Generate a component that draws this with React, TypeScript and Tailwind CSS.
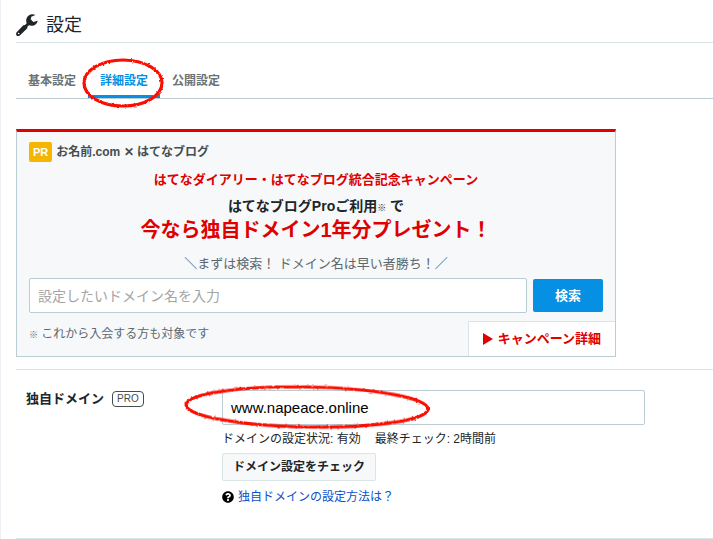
import type { ReactNode } from "react";
import { FaQuestionCircle } from "react-icons/fa";

const TABS = [
  { label: "基本設定", href: "#basic", active: false },
  { label: "詳細設定", href: "#detail", active: true },
  { label: "公開設定", href: "#publish", active: false },
];

function WrenchIcon() {
  return (
    <svg className="size-[22px]" viewBox="0 0 66 66" fill="currentColor" aria-hidden="true">
      <path
        fillRule="evenodd"
        d="M58 3C48-2 34 3 31 15c-1 5 0 9 1 13l-5 5-5 1L2 55c-3 4-2 9 2 11 3 1 7 0 9-3l21-20v-5l5-4c11 4 24-1 26-14l-13 4-8-8 2-8zM8 56a2.5 2.5 0 1 1 0 5 2.5 2.5 0 0 1 0-5z"
      />
    </svg>
  );
}

// red crayon ring drawn over the page
function HandCircle({ id, className, width, height, rotate = 0 }: { id: string; className: string; width: number; height: number; rotate?: number }) {
  return (
    <svg className={`pointer-events-none absolute overflow-visible ${className}`} width={width} height={height} viewBox={`0 0 ${width} ${height}`} fill="none" aria-hidden="true">
      <filter id={id} x="-5%" y="-15%" width="110%" height="130%">
        <feTurbulence type="fractalNoise" baseFrequency="0.5" numOctaves="1" seed="4" />
        <feDisplacementMap in="SourceGraphic" scale="2.5" xChannelSelector="R" yChannelSelector="G" />
      </filter>
      <ellipse
        cx={width / 2}
        cy={height / 2}
        rx={width / 2 - 3}
        ry={height / 2 - 3}
        stroke="#fb0d05"
        strokeWidth="3.2"
        transform={`rotate(${rotate} ${width / 2} ${height / 2})`}
        filter={`url(#${id})`}
      />
    </svg>
  );
}

function Tabs() {
  return (
    <nav className="flex border-b border-[#b9cdd2] leading-5 font-bold">
      {TABS.map((t) => (
        <a
          key={t.label}
          href={t.href}
          className={
            t.active
              ? "relative border-b-3 border-[#0590e4] px-3 pt-2 pb-1 text-[#0590e4]"
              : "px-3 pt-2 pb-1 text-[#6a7377]"
          }
        >
          {t.label}
          {t.active && <HandCircle id="ring-tab" className="-top-[6px] -left-[7px]" width={84} height={52} />}
        </a>
      ))}
    </nav>
  );
}

function Campaign() {
  return (
    <section className="max-w-[600px] border border-t-3 border-[#b9cdd2] border-t-[#e00000] bg-[#f6f8fa]">
      <div className="px-3 pt-2">
        <p className="flex h-6 items-center gap-1 font-bold text-[#454d50]">
          <span className="rounded-xs bg-[#f4b600] px-1 text-[11px] leading-5 text-white">PR</span>
          お名前.com ✕ はてなブログ
        </p>
        <div className="flex flex-col items-center pt-1.5 font-bold">
          <p className="text-[13px] leading-5 text-[#e00000]">はてなダイアリー・はてなブログ統合記念キャンペーン</p>
          <p className="mt-1.5 text-sm leading-5 text-[#202528]">
            はてなブログProご利用<small className="text-[9px] font-normal">※</small> で
          </p>
          <p className="text-xl leading-6 text-[#e00000]">今なら独自ドメイン1年分プレゼント！</p>
        </div>
        <form className="pt-2.5" onSubmit={(e) => e.preventDefault()}>
          <label htmlFor="search" className="block text-center text-[13px] leading-6 text-[#5e686c]">
            ＼まずは検索！ ドメイン名は早い者勝ち！／
          </label>
          <div className="mt-0.5 flex items-center gap-1.5">
            <input
              id="search"
              type="text"
              placeholder="設定したいドメイン名を入力"
              className="h-[35px] min-w-0 flex-1 rounded-xs border border-[#b9cdd2] bg-white px-2 text-sm placeholder:text-[#a5a5a5]"
            />
            <button type="submit" className="h-[33px] rounded-xs bg-[#0590e4] px-[22px] text-[13px] font-bold text-white">
              検索
            </button>
          </div>
        </form>
      </div>
      <div className="flex items-end justify-between pt-2 pl-3">
        <p className="pb-3.5 text-[#5e686c]">
          <small className="text-[9px]">※</small> これから入会する方も対象です
        </p>
        <a href="#campaign" className="flex h-[35px] items-center gap-[5px] border-t border-l border-[#d9e5e7] bg-white px-3.5 text-[13px] font-bold text-[#e00000]">
          <svg width="10" height="12" viewBox="0 0 10 12" fill="currentColor" aria-hidden="true">
            <path d="M0 0 10 6 0 12z" />
          </svg>
          キャンペーン詳細
        </a>
      </div>
    </section>
  );
}

function SettingRow({ label, children }: { label: ReactNode; children: ReactNode }) {
  return (
    <section className="mt-3 flex border-y border-[#d9e5e7] pt-5 pb-[31px] pl-2.5">
      <div className="w-[196px] shrink-0">{label}</div>
      <div className="min-w-0 flex-1">{children}</div>
    </section>
  );
}

export default function App() {
  return (
    <div className="min-h-screen border-l border-[#eceff4] bg-white pl-[15px] font-['Liberation_Sans','Noto_Sans_CJK_JP',sans-serif] text-xs text-[#202528]">
      <h1 className="flex h-[43px] items-center gap-2 border-b border-[#d9e5e7] pt-2 text-lg">
        <WrenchIcon />
        設定
      </h1>
      <div className="pt-5">
        <Tabs />
      </div>
      <div className="pt-[30px]">
        <Campaign />
      </div>
      <SettingRow
        label={
          <div className="flex items-center gap-2">
            <label htmlFor="domain" className="text-[13px] font-bold">独自ドメイン</label>
            <span className="rounded-sm border border-[#454d50] px-1 text-[10px] leading-[14px] text-[#454d50]">PRO</span>
          </div>
        }
      >
        <div className="relative max-w-[423px]">
          <input id="domain" type="text" defaultValue="www.napeace.online" className="block h-[35px] w-full rounded-xs border border-[#b9cdd2] px-2 text-[15px] text-black" />
          <HandCircle id="ring-domain" className="-top-[6px] -left-[39px]" width={248} height={46} rotate={1} />
        </div>
        <p className="mt-1 leading-5">
          <span className="mr-3.5">ドメインの設定状況: 有効</span>
          <span>最終チェック: 2時間前</span>
        </p>
        <button type="button" className="mt-1 block h-7 rounded-xs border border-[#d9e5e7] bg-[#f6f8fa] px-2.5 font-bold">
          ドメイン設定をチェック
        </button>
        <p className="mt-1.5 flex items-center gap-1 leading-5">
          <FaQuestionCircle className="size-3 text-black" />
          <a href="#help" className="text-[#0a50c8]">独自ドメインの設定方法は？</a>
        </p>
      </SettingRow>
    </div>
  );
}
